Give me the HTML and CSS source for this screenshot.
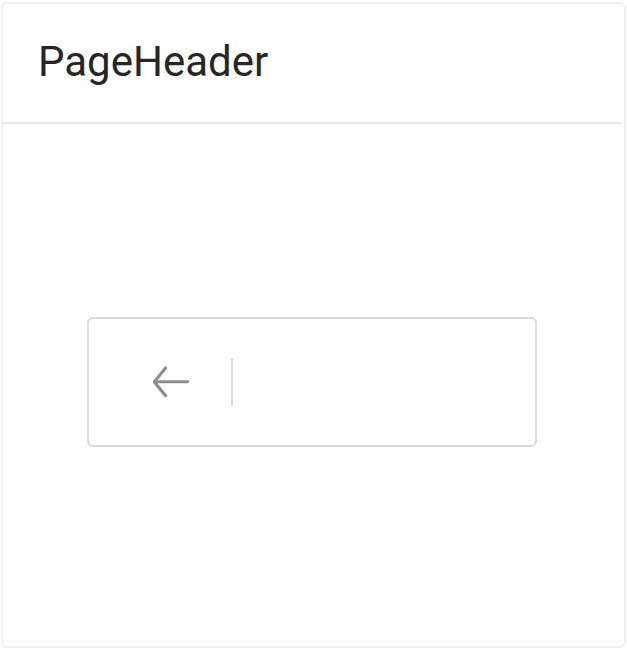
FILE: index.html
```html
<!DOCTYPE html>
<html lang="en">
<head>
<meta charset="utf-8">
<title>PageHeader</title>
<link rel="stylesheet" href="styles.css">
</head>
<body>
<div class="card">
  <div class="card-head">
    <div class="card-title">PageHeader</div>
  </div>
  <div class="card-body">
    <div class="demo-box">
      <span class="back" aria-label="back">
        <svg class="back-icon" width="36" height="32" viewBox="0 0 36 32" fill="none">
          <polyline points="13.4,1 1.3,15.8 13.4,30.8" stroke="#8c8c8c" stroke-width="3.1" stroke-linecap="butt" stroke-linejoin="miter"/>
          <line x1="1.6" y1="15.8" x2="35.8" y2="15.8" stroke="#8c8c8c" stroke-width="3.1"/>
        </svg>
      </span>
      <span class="v-divider"></span>
    </div>
  </div>
</div>
</body>
</html>
```
FILE: styles.css
```css
html, body {
  margin: 0;
  padding: 0;
  background: #ffffff;
}

body {
  font-family: Roboto, "Liberation Sans", Arial, sans-serif;
}

.card {
  margin: 2px 1px 1px 1px;
  height: 646px;
  box-sizing: border-box;
  border: 2px solid #f0f0f0;
  border-radius: 6px;
  display: flex;
  flex-direction: column;
  background: #ffffff;
}

.card-head {
  height: 118px;
  box-sizing: border-box;
  margin-right: 3px;
  border-bottom: 2px solid #e8e8e8;
  display: flex;
  align-items: center;
  padding: 0 0 3px 35px;
  height: 120px;
}

.card-title {
  font-size: 42px;
  color: #262626;
  line-height: 48px;
}

.card-body {
  flex: 1;
  padding: 193px 0 0 84px;
}

.demo-box {
  width: 450px;
  height: 130px;
  box-sizing: border-box;
  border: 2px solid #d9d9d9;
  border-radius: 6px;
  display: flex;
  align-items: center;
  padding-left: 64px;
  gap: 42px;
}

.back {
  display: flex;
  width: 36px;
  height: 32px;
}

.back-icon {
  display: block;
}

.v-divider {
  width: 2px;
  height: 48px;
  background: #d9d9d9;
}
```
